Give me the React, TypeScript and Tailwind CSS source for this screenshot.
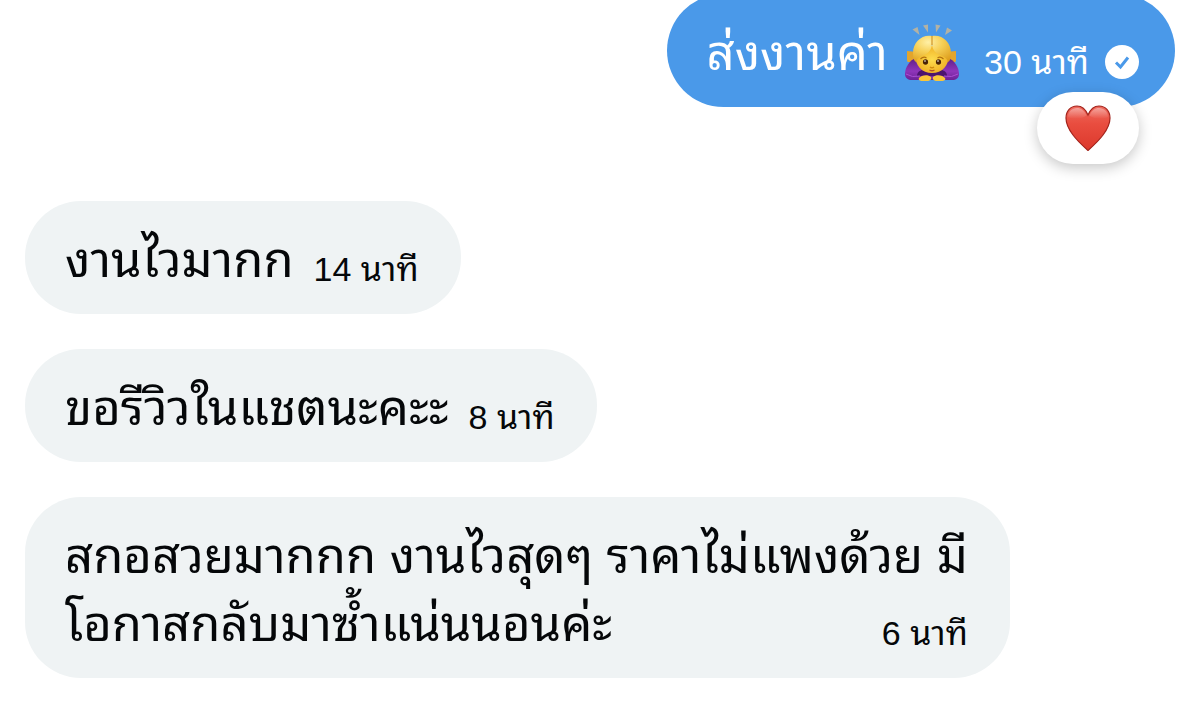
import React from "react";

interface Message {
  id: number;
  lines: string[];
  time: string;
}

const received: Message[] = [
  { id: 1, lines: ["งานไวมากก"], time: "14 นาที" },
  { id: 2, lines: ["ขอรีวิวในแชตนะคะะ"], time: "8 นาที" },
  {
    id: 3,
    lines: ["สกอสวยมากกก งานไวสุดๆ ราคาไม่แพงด้วย มี", "โอกาสกลับมาซ้ำแน่นนอนค่ะ"],
    time: "6 นาที",
  },
];

const BowingWoman = () => (
  <svg viewBox="0 0 56 58" className="h-[58px] w-14 shrink-0" role="img" aria-label="ขอบคุณค่ะ">
    <defs>
      <radialGradient id="hair" cx="0.4" cy="0.25" r="0.85">
        <stop offset="0" stopColor="#fff0a6" />
        <stop offset="0.45" stopColor="#f6cf55" />
        <stop offset="1" stopColor="#dd9d1c" />
      </radialGradient>
      <radialGradient id="skin" cx="0.5" cy="0.5" r="0.6">
        <stop offset="0" stopColor="#fddc4e" />
        <stop offset="1" stopColor="#eeaa1f" />
      </radialGradient>
      <linearGradient id="shirt" x1="0" y1="0" x2="0" y2="1">
        <stop offset="0" stopColor="#5d1f86" />
        <stop offset="0.6" stopColor="#8f35ba" />
        <stop offset="1" stopColor="#6d2196" />
      </linearGradient>
    </defs>
    <g fill="#b3b2a4">
      <path d="M8.500 5.500l5-2.500 2 8z" />
      <path d="M19 1.500l5-1 0 8z" />
      <path d="M31.500 .5l5 1-4.500 7z" />
      <path d="M43 3.500l5 3-7 4.500z" />
    </g>
    <path d="M3 27l10 1v10H4q-1 0-1-2z" fill="#e3a52c" />
    <path d="M52 27l-10 1v10h9q1 0 1-2z" fill="#e3a52c" />
    <path
      d="M12 34C6 36 1 43 1 50c0 4 3 6 7 6h40c4 0 7-2 7-6 0-7-5-14-11-16z"
      fill="url(#shirt)"
    />
    <path d="M13 52c0-5 5-7 11-7h8c6 0 11 2 11 7z" fill="#4c146e" />
    <path d="M2 50q6 4 14 2M54 50q-6 4-14 2" stroke="#a94fd2" strokeWidth="1" fill="none" />
    <path d="M11 30c0 12 7 19 17 19s17-7 17-19l-8-8H19z" fill="url(#skin)" />
    <path
      d="M28 12C18 10 9 18 9 29c0 5 1 8 3 9 1-4 4-5 8-7 5-2 8-6 8-12 0 6 3 10 8 12 4 2 7 3 8 7 2-1 3-4 3-9 0-11-9-19-19-17z"
      fill="url(#hair)"
    />
    <path d="M28 12v9" stroke="#c98515" strokeWidth="1" />
    <path d="M16.500 35q3-3 6-1M33.500 34q3-2 6 1" stroke="#b3720f" strokeWidth="1.200" fill="none" />
    <ellipse cx="21.500" cy="38" rx="2.600" ry="2.800" fill="#4a2306" />
    <ellipse cx="34.500" cy="38" rx="2.600" ry="2.800" fill="#4a2306" />
    <circle cx="21" cy="37" r=".8" fill="#fff" />
    <circle cx="34" cy="37" r=".8" fill="#fff" />
    <path d="M26 43q2 1.500 4 0" stroke="#cf8a10" strokeWidth="1.500" fill="none" />
    <path d="M25.500 46q2.500 1.500 5 0" stroke="#b5502a" strokeWidth="1.400" fill="none" />
    <path d="M15 54c2-3 9-4 12-1 1 2-1 4-4 4h-5c-2 0-4-1-3-3z" fill="#fac638" />
    <path d="M41 54c-2-3-9-4-12-1-1 2 1 4 4 4h5c2 0 4-1 3-3z" fill="#fac638" />
  </svg>
);

const SentBadge = () => (
  <svg viewBox="0 0 34 34" className="size-[34px] shrink-0" role="img" aria-label="ส่งแล้ว">
    <circle cx="17" cy="17" r="17" fill="#fff" />
    <path
      d="M11 17.500l4.500 4.500 7.500-9.500"
      fill="none"
      stroke="#4a99e9"
      strokeWidth="3"
      strokeLinecap="butt"
      strokeLinejoin="miter"
    />
  </svg>
);

const Heart = () => (
  <svg viewBox="0 0 46 46" className="size-[46px]" aria-hidden="true">
    <defs>
      <linearGradient id="heart" x1="0" y1="0" x2="0" y2="1">
        <stop offset="0" stopColor="#ee6a5e" />
        <stop offset="0.4" stopColor="#e94d3f" />
        <stop offset="1" stopColor="#dc382c" />
      </linearGradient>
      <linearGradient id="shine" x1="0" y1="0" x2="0" y2="1">
        <stop offset="0" stopColor="#fff" stopOpacity="0.4" />
        <stop offset="1" stopColor="#fff" stopOpacity="0" />
      </linearGradient>
    </defs>
    <path
      d="M23 10C20.500 4 16.500 1 12 1 5.500 1 1 6 1 13c0 6 2.500 11 7 17 4 5.500 10 11 15 15.500 5-4.500 11-10 15-15.500 4.500-6 7-11 7-17C45 6 40.500 1 34 1c-4.500 0-8.500 3-11 9z"
      fill="url(#heart)"
      stroke="#a3241c"
      strokeWidth="1.200"
    />
    <path d="M3 12c0-5.500 4-9 9-9 4 0 7.500 2.500 9.500 7.500C17 14 8 15 3 12zM24.500 10.500C26.500 5.500 30 3 34 3c5 0 9 3.500 9 9-5 3-14 2-18.500-1.500z" fill="url(#shine)" />
  </svg>
);

const ReceivedBubble = ({ message }: { message: Message }) => {
  const last = message.lines.length - 1;

  return (
    <li className="max-w-full rounded-[56px] bg-[#eff3f4] pt-[25px] pr-[42px] pb-5 pl-10 text-[#050709]">
      {message.lines.slice(0, last).map((line) => (
        <p key={line} className="text-[49px] leading-[68px]">
          {line}
        </p>
      ))}
      <div className="flex items-end justify-between gap-5">
        <p className="text-[49px] leading-[68px]">{message.lines[last]}</p>
        <time className="shrink-0 text-[34px] leading-[50px]">{message.time}</time>
      </div>
    </li>
  );
};

const App = () => {
  return (
    <main className="min-h-screen overflow-hidden bg-white px-[25px] pb-[25px] font-['Liberation_Sans','Noto_Sans_Thai_Looped','Loma','Garuda','Waree',sans-serif] whitespace-nowrap">
      <div className="flex justify-end">
        <div className="relative -mt-1.5 rounded-[57px] bg-[#4a99e9] pt-[25px] pr-9 pb-5 pl-10 text-white">
          <div className="flex items-end gap-6">
            <div className="flex items-center gap-4">
              <p className="text-[49px] leading-[68px]">ส่งงานค่า</p>
              <BowingWoman />
            </div>
            <div className="flex items-center gap-4">
              <time className="text-[34px] leading-[50px]">30 นาที</time>
              <SentBadge />
            </div>
          </div>
          <button
            type="button"
            aria-label="ถูกใจ"
            className="absolute right-9 -bottom-[57px] flex h-[72px] w-[102px] items-center justify-center rounded-full bg-white shadow-[0_4px_14px_rgba(0,0,0,0.22)]"
          >
            <Heart />
          </button>
        </div>
      </div>

      <ul className="mt-[94px] flex flex-col items-start gap-[35px]">
        {received.map((message) => (
          <ReceivedBubble key={message.id} message={message} />
        ))}
      </ul>
    </main>
  );
};

export default App;
